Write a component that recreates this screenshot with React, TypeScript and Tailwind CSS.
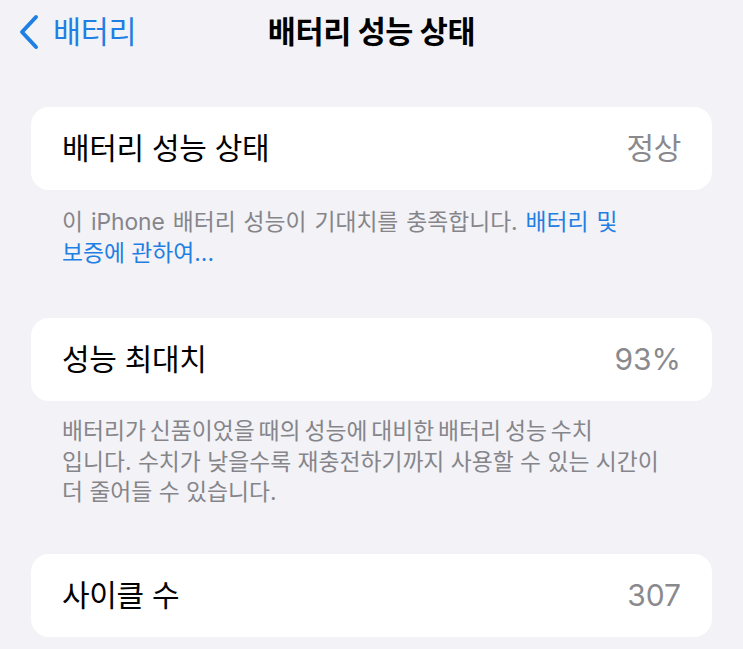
export default function App() {
  const font = { fontFamily: '"Inter", "Noto Sans CJK KR", sans-serif' }

  return (
    <div className="min-h-[649px] w-[743px] bg-[#f2f2f7] text-black" style={font}>
      <div className="grid h-[64px] grid-cols-[1fr_auto_1fr] items-center">
        <div className="flex items-center pl-[18px] text-[#1f7fe3]">
          <svg width="22" height="36" viewBox="0 0 22 36" fill="none">
            <path d="M18 3 L4 18 L18 33" stroke="currentColor" strokeWidth="4" strokeLinecap="round" strokeLinejoin="round" />
          </svg>
          <span className="ml-[13px] text-[30.5px] tracking-[-0.3px]">배터리</span>
        </div>
        <div className="text-[30.5px] font-bold tracking-[-0.4px]">배터리 성능 상태</div>
        <div />
      </div>

      <div className="px-[31px] pt-[43px]">
        <div className="flex h-[83px] items-center justify-between rounded-[18px] bg-white px-[31px]">
          <span className="text-[30px] tracking-[-0.3px]">배터리 성능 상태</span>
          <span className="text-[30px] tracking-[-0.3px] text-[#8a8a8e]">정상</span>
        </div>
        <p className="whitespace-nowrap px-[31px] pt-[16px] text-[22.8px] leading-[31px] text-[#85858a]">
          <span className="[word-spacing:1.5px]">
            이 iPhone 배터리 성능이 기대치를 충족합니다. <span className="text-[#1f7fe3]">배터리 및</span>
          </span>
          <br />
          <span className="text-[#1f7fe3]">보증에 관하여...</span>
        </p>

        <div className="mt-[50px] flex h-[83px] items-center justify-between rounded-[18px] bg-white px-[31px]">
          <span className="text-[30px] tracking-[-0.3px]">성능 최대치</span>
          <span className="text-[30px] text-[#8a8a8e]">93%</span>
        </div>
        <p className="whitespace-nowrap px-[31px] pt-[15px] text-[22.8px] leading-[30.5px] text-[#85858a]">
          <span className="[word-spacing:-2.5px]">배터리가 신품이었을 때의 성능에 대비한 배터리 성능 수치</span>
          <br />
          입니다. 수치가 낮을수록 재충전하기까지 사용할 수 있는 시간이
          <br />
          더 줄어들 수 있습니다.
        </p>

        <div className="mt-[46px] flex h-[83px] items-center justify-between rounded-[18px] bg-white px-[31px]">
          <span className="text-[30px] tracking-[-0.3px]">사이클 수</span>
          <span className="text-[30px] text-[#8a8a8e]">307</span>
        </div>
      </div>
    </div>
  )
}
